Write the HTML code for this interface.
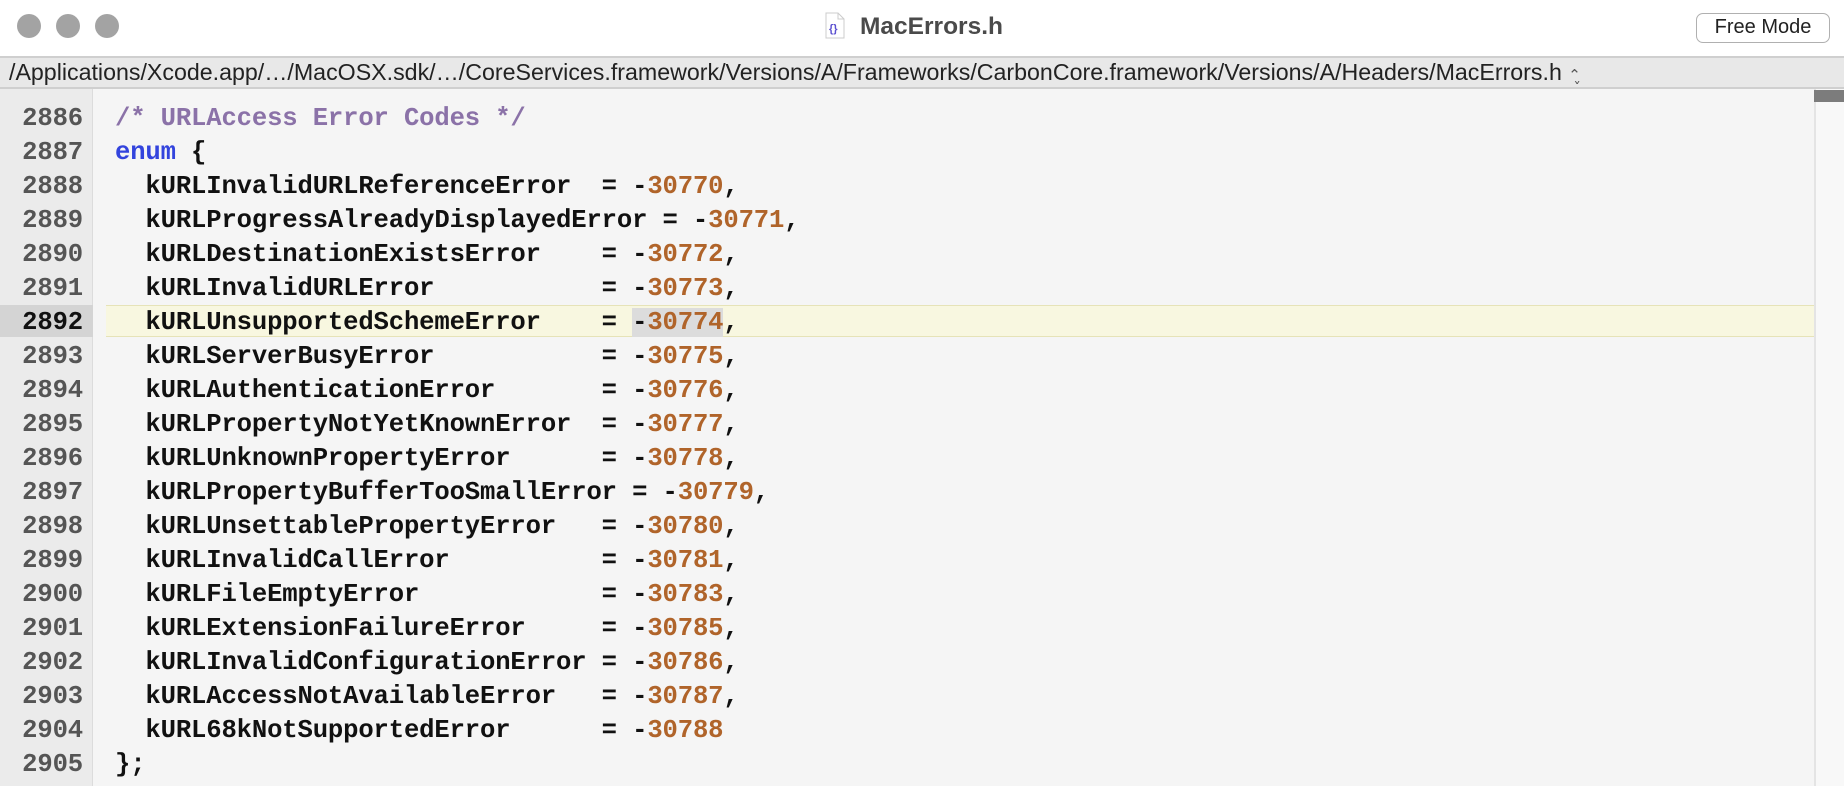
<!DOCTYPE html>
<html><head><meta charset="utf-8"><style>
*{margin:0;padding:0;box-sizing:border-box}
body{width:1844px;height:786px;overflow:hidden;background:#f5f5f5;position:relative;font-family:"Liberation Sans",sans-serif}
#title{position:absolute;left:0;top:0;width:1844px;height:56px;background:#fff}
.tl{position:absolute;top:14px;width:24px;height:24px;border-radius:50%;background:#a3a3a3}
#name{position:absolute;left:860px;top:13px;font-size:24.5px;font-weight:bold;color:#4a4a4a}
#btn{position:absolute;left:1696px;top:13px;width:134px;height:30px;border:1.5px solid #b0b0b0;border-radius:7px;font-size:20px;color:#222;text-align:center;line-height:27px;background:#fff}
#path{position:absolute;left:0;top:56px;width:1844px;height:33px;background:#e8e8e8;border-top:2px solid #cfcfcf;border-bottom:2px solid #cfcfcf;font-size:23.2px;color:#222;line-height:29px;padding-left:9px;white-space:nowrap}
#gutter{position:absolute;left:0;top:89px;width:93px;height:697px;background:#ebebeb;border-right:1px solid #dcdcdc}
#sb{position:absolute;left:1814px;top:89px;width:30px;height:697px;background:#f8f8f8;border-left:2px solid #e4e4e4}
#thumb{position:absolute;left:1814px;top:90px;width:30px;height:12px;background:#7c7c7c}
#hl{position:absolute;left:106px;top:305px;width:1708px;height:32px;background:#f8f7e0;border-top:1px solid #e6e3b8;border-bottom:1px solid #e6e3b8}
#ghl{position:absolute;left:0;top:305px;width:93px;height:32px;background:#d4d4d4}
.code{position:absolute;top:102px;font-family:"Liberation Mono",monospace;font-weight:bold;font-size:25.6px;letter-spacing:-0.15px;line-height:34px;white-space:pre}
#nums{left:0;width:83px;text-align:right;color:#555}
#src{left:115px;color:#111}
.c{color:#8b72a8}.k{color:#3344dd}.n{color:#b0642a}
.sel{background:#dcdcdc}
</style></head><body>
<div id="title">
<div class="tl" style="left:17px"></div><div class="tl" style="left:56px"></div><div class="tl" style="left:95px"></div>
<svg style="position:absolute;left:825px;top:12px" width="20" height="27" viewBox="0 0 20 27"><path d="M1 1h12l6 6v19H1z" fill="#fff" stroke="#ccc"/><path d="M13 1v6h6" fill="none" stroke="#ccc"/><text x="4" y="20" font-size="11" font-weight="bold" fill="#5a4fd0" font-family="Liberation Sans">{}</text></svg>
<div id="name">MacErrors.h</div>
<div id="btn">Free Mode</div>
</div>
<div id="path">/Applications/Xcode.app/…/MacOSX.sdk/…/CoreServices.framework/Versions/A/Frameworks/CarbonCore.framework/Versions/A/Headers/MacErrors.h <span style="font-size:15px;color:#555">⌃̬</span></div>
<div id="gutter"></div>
<div id="ghl"></div>
<div id="hl"></div>
<div id="sb"></div><div id="thumb"></div>
<div class="code" id="nums">2886
2887
2888
2889
2890
2891
<span style="color:#111">2892</span>
2893
2894
2895
2896
2897
2898
2899
2900
2901
2902
2903
2904
2905</div>
<div class="code" id="src"><span class="c">/* URLAccess Error Codes */</span>
<span class="k">enum</span> {
  kURLInvalidURLReferenceError  = -<span class="n">30770</span>,
  kURLProgressAlreadyDisplayedError = -<span class="n">30771</span>,
  kURLDestinationExistsError    = -<span class="n">30772</span>,
  kURLInvalidURLError           = -<span class="n">30773</span>,
  kURLUnsupportedSchemeError    = <span class="sel">-<span class="n">30774</span></span>,
  kURLServerBusyError           = -<span class="n">30775</span>,
  kURLAuthenticationError       = -<span class="n">30776</span>,
  kURLPropertyNotYetKnownError  = -<span class="n">30777</span>,
  kURLUnknownPropertyError      = -<span class="n">30778</span>,
  kURLPropertyBufferTooSmallError = -<span class="n">30779</span>,
  kURLUnsettablePropertyError   = -<span class="n">30780</span>,
  kURLInvalidCallError          = -<span class="n">30781</span>,
  kURLFileEmptyError            = -<span class="n">30783</span>,
  kURLExtensionFailureError     = -<span class="n">30785</span>,
  kURLInvalidConfigurationError = -<span class="n">30786</span>,
  kURLAccessNotAvailableError   = -<span class="n">30787</span>,
  kURL68kNotSupportedError      = -<span class="n">30788</span>
};</div>
</body></html>
